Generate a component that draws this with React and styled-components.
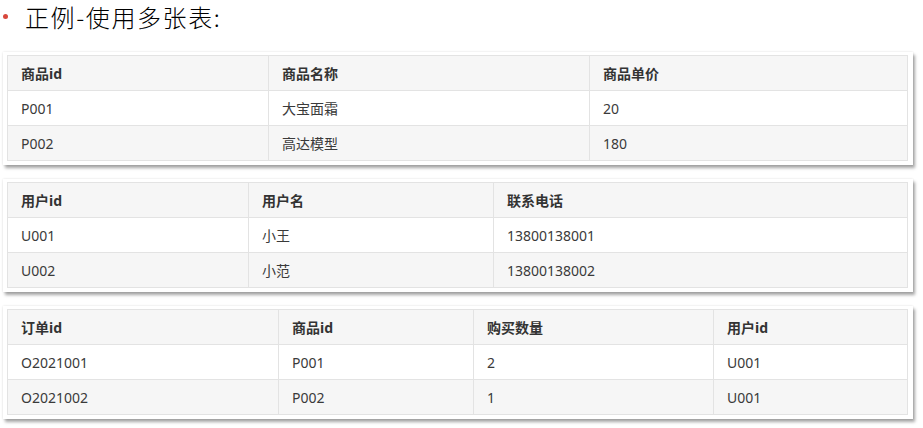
import React from "react";
import styled, { createGlobalStyle } from "styled-components";

const Global = createGlobalStyle`
  html, body { margin: 0; padding: 0; background: #fff; }
  body {
    width: 923px; height: 428px; overflow: hidden;
    font-family: "Noto Sans", "Noto Sans CJK SC", sans-serif;
    color: #333;
  }
`;

const Page = styled.div`
  position: relative;
  width: 923px;
  height: 428px;
  display: flex;
  flex-direction: column;
  box-sizing: border-box;
  padding: 0 0 0 3px;
`;

const Title = styled.div`
  display: flex;
  align-items: center;
  height: 33px;
  gap: 17px;
  font-family: "Noto Sans CJK SC", sans-serif;
  font-weight: 300;
  font-size: 24px;
  letter-spacing: 1.6px;
  color: #000;
`;

const Dot = styled.span`
  width: 5px;
  height: 5px;
  border-radius: 50%;
  background: #d8483c;
`;

const Cards = styled.div`
  display: flex;
  flex-direction: column;
  gap: 14px;
  margin-top: 19px;
`;

const Card = styled.div`
  width: 910px;
  box-sizing: border-box;
  padding: 3px 5px 4px 4px;
  background: #fff;
  box-shadow: 2px 3px 3px rgba(0, 0, 0, 0.35), 0 0 2px rgba(0, 0, 0, 0.12);
`;

const Table = styled.div`
  display: grid;
  grid-template-columns: ${(p) => p.$cols};
  border: 1px solid #e3e3e3;
  border-right: none;
  border-bottom: none;
  font-size: 14px;
`;

const Cell = styled.div`
  height: 35px;
  box-sizing: border-box;
  display: flex;
  align-items: center;
  padding-left: 13px;
  border-right: 1px solid #e3e3e3;
  border-bottom: 1px solid #e3e3e3;
  background: ${(p) => (p.$shade ? "#f6f6f6" : "#fff")};
  font-weight: ${(p) => (p.$head ? 700 : 400)};
  color: ${(p) => (p.$head ? "#333" : "#3a3a3a")};
`;

const Overlay = styled.div`
  position: absolute;
  inset: 0;
  pointer-events: none;
  overflow: hidden;
`;

const Mark = styled.span`
  position: absolute;
  font-family: "Noto Sans", sans-serif;
  font-weight: 300;
  font-size: 18px;
  color: rgba(0, 0, 0, 0.025);
  white-space: nowrap;
`;

const tables = [
  {
    cols: "261px 321px 1fr",
    rows: [
      ["商品id", "商品名称", "商品单价"],
      ["P001", "大宝面霜", "20"],
      ["P002", "高达模型", "180"],
    ],
  },
  {
    cols: "241px 245px 1fr",
    rows: [
      ["用户id", "用户名", "联系电话"],
      ["U001", "小王", "13800138001"],
      ["U002", "小范", "13800138002"],
    ],
  },
  {
    cols: "271px 195px 240px 1fr",
    rows: [
      ["订单id", "商品id", "购买数量", "用户id"],
      ["O2021001", "P001", "2", "U001"],
      ["O2021002", "P002", "1", "U001"],
    ],
  },
];

const markRows = [6, 72, 139, 206, 273, 339, 406];
const markCols = [-35, 213, 461, 709];

export default function App() {
  return (
    <Page>
      <Global />
      <Title>
        <Dot />
        <span>正例-使用多张表:</span>
      </Title>
      <Cards>
        {tables.map((t, ti) => (
          <Card key={ti}>
            <Table $cols={t.cols}>
              {t.rows.map((r, ri) =>
                r.map((c, ci) => (
                  <Cell key={ri + "-" + ci} $head={ri === 0} $shade={ri !== 1}>
                    {c}
                  </Cell>
                ))
              )}
            </Table>
          </Card>
        ))}
      </Cards>
      <Overlay>
        {markRows.map((y) =>
          markCols.map((x) => (
            <Mark key={x + "_" + y} style={{ left: x, top: y }}>
              8800788:23java040
            </Mark>
          ))
        )}
      </Overlay>
    </Page>
  );
}
